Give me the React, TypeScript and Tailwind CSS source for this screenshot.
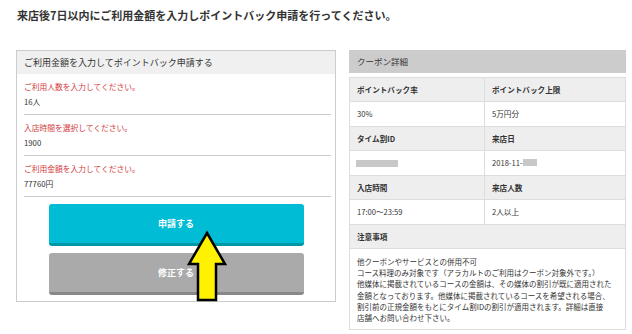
import React from "react";

const Row = ({
  left,
  right,
  gray,
  h,
}: {
  left: React.ReactNode;
  right: React.ReactNode;
  gray?: boolean;
  h: string;
}) => (
  <div className={`flex border-b border-[#dddddd] ${gray ? "bg-[#eeeeee] font-bold" : "bg-white"} ${h}`}>
    <div className="w-[135px] shrink-0 border-r border-[#dddddd] pl-[7px] flex items-center">{left}</div>
    <div className="flex-1 pl-[7px] flex items-center">{right}</div>
  </div>
);

const Section = ({ label, value, last }: { label: string; value: string; last?: boolean }) => (
  <div className={`pt-[8px] pb-[7px] border-b border-[#cccccc] ${last ? "" : ""}`}>
    <div className="text-[7.75px] leading-[10px] text-[#d23c3c]">{label}</div>
    <div className="mt-[5px] text-[7.75px] leading-[10px] text-[#333333]">{value}</div>
  </div>
);

export default function App() {
  return (
    <div className="relative w-[632px] h-[334px] bg-white overflow-hidden text-[#333333] font-['Noto_Sans_CJK_JP',sans-serif]">
      <h1 className="pl-[17px] pt-[7px] text-[11px] leading-[16px] font-bold whitespace-nowrap">
        来店後7日以内にご利用金額を入力しポイントバック申請を行ってください。
      </h1>
      <div className="flex items-start mt-[27px] pl-[16px] gap-[13px]">
        {/* left panel */}
        <div className="w-[320px] border border-[#cccccc] bg-white">
          <div className="h-[23px] bg-[#f0f0f0] pl-[7px] flex items-center text-[9px]">
            ご利用金額を入力してポイントバック申請する
          </div>
          <div className="ml-[7px] mr-[4px]">
            <Section label="ご利用人数を入力してください。" value="16人" />
            <Section label="入店時間を選択してください。" value="1900" />
            <Section label="ご利用金額を入力してください。" value="77760円" />
          </div>
          <div className="flex flex-col items-center gap-[7px] pt-[7px] pb-[6px]">
            <div className="w-[255px] h-[42px] rounded-[3px] bg-[#00bcd4] border-b-[3px] border-[#0097a7] flex items-center justify-center text-white font-bold text-[9px]">
              申請する
            </div>
            <div className="w-[255px] h-[42px] rounded-[3px] bg-[#aaaaaa] border-b-[3px] border-[#888888] flex items-center justify-center text-white font-bold text-[9px]">
              修正する
            </div>
          </div>
        </div>
        {/* right panel */}
        <div className="w-[277px]">
          <div className="h-[23px] bg-[#cccccc] pl-[8px] flex items-center text-[8.5px]">クーポン詳細</div>
          <div className="mt-[4px] border-l border-r border-t border-[#dddddd] text-[7.6px]">
            <Row gray h="h-[24px]" left="ポイントバック率" right="ポイントバック上限" />
            <Row h="h-[25px]" left="30%" right="5万円分" />
            <Row gray h="h-[24px]" left="タイム割ID" right="来店日" />
            <Row
              h="h-[25px]"
              left={<span className="block w-[42px] h-[7px] bg-[#c8c8c8] -ml-[1px]" />}
              right={
                <span className="flex items-center">
                  2018-11-
                  <span className="inline-block w-[14px] h-[7px] bg-[#c8c8c8]" />
                </span>
              }
            />
            <Row gray h="h-[24px]" left="入店時間" right="来店人数" />
            <Row h="h-[25px]" left="17:00～23:59" right="2人以上" />
            <div className="h-[24px] bg-[#eeeeee] border-b border-[#dddddd] pl-[7px] flex items-center font-bold">
              注意事項
            </div>
            <div className="border-b border-[#dddddd] pl-[7px] pt-[7px] pb-[6px] text-[7.5px] leading-[11.2px] whitespace-nowrap">
              他クーポンやサービスとの併用不可
              <br />
              コース料理のみ対象です（アラカルトのご利用はクーポン対象外です。）
              <br />
              他媒体に掲載されているコースの金額は、その媒体の割引が既に適用された
              <br />
              金額となっております。他媒体に掲載されているコースを希望される場合、
              <br />
              割引前の正規金額をもとにタイム割IDの割引が適用されます。詳細は直接
              <br />
              店舗へお問い合わせ下さい。
            </div>
          </div>
        </div>
      </div>
      <svg
        className="absolute left-[185px] top-[228px]"
        width="46"
        height="76"
        viewBox="0 0 46 76"
      >
        <polygon
          points="22,5 40,36 31,36 31,72 13,72 13,36 4,36"
          fill="#fff200"
          stroke="#000000"
          strokeWidth="2.5"
          strokeLinejoin="miter"
        />
      </svg>
    </div>
  );
}
